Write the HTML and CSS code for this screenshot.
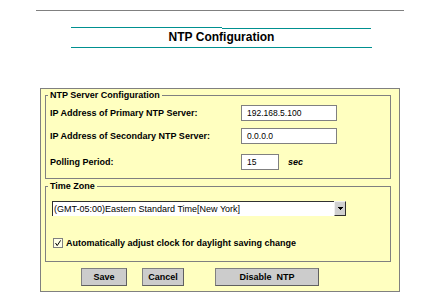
FILE: index.html
```html
<!DOCTYPE html>
<html>
<head>
<meta charset="utf-8">
<link rel="stylesheet" href="styles.css">
</head>
<body>
<div class="topline"></div>
<div class="titleblock">
  <div class="tealtop"><div class="seg"></div><div class="seg seg-low"></div></div>
  <div class="title">NTP Configuration</div>
  <div class="tealbottom"></div>
</div>
<div class="box">
  <fieldset class="fs fs-server">
    <legend>NTP Server Configuration</legend>
    <div class="row">
      <span class="label">IP Address of Primary NTP Server:</span>
      <span class="input input-wide">192.168.5.100</span>
    </div>
    <div class="row row-second">
      <span class="label">IP Address of Secondary NTP Server:</span>
      <span class="input input-wide">0.0.0.0</span>
    </div>
    <div class="row row-third">
      <span class="label">Polling Period:</span>
      <span class="input input-short">15</span>
      <span class="unit">sec</span>
    </div>
  </fieldset>
  <fieldset class="fs fs-zone">
    <legend>Time Zone</legend>
    <div class="select">
      <span class="select-text">(GMT-05:00)Eastern Standard Time[New York]</span>
      <span class="select-btn"><svg width="9" height="9" viewBox="0 0 9 9"><path d="M2 3h5v1H6v1H5v1H4V5H3V4H2z" fill="#000"/></svg></span>
    </div>
    <div class="check-row">
      <svg class="check" width="10" height="10" viewBox="0 0 10 10"><rect x="0.5" y="0.5" width="9" height="9" fill="#ffffe8" stroke="#808080"/><path d="M2.5 5 L4.2 7.6 L7.6 2.4" fill="none" stroke="#000" stroke-width="1"/></svg>
      <span class="check-label">Automatically adjust clock for daylight saving change</span>
    </div>
  </fieldset>
  <div class="buttons">
    <span class="btn btn-save">Save</span>
    <span class="btn btn-cancel">Cancel</span>
    <span class="btn btn-disable">Disable&nbsp; NTP</span>
  </div>
</div>
</body>
</html>
```
FILE: styles.css
```css
html, body {
  margin: 0;
  padding: 0;
  background: #ffffff;
  font-family: "Liberation Sans", Arial, sans-serif;
  color: #000;
}
.topline {
  margin: 10px 0 0 36px;
  width: 368px;
  height: 1px;
  background: #808080;
}
.titleblock {
  margin: 16px 0 0 71px;
  width: 301px;
}
.tealtop {
  display: flex;
  align-items: flex-start;
  height: 2px;
}
.seg {
  width: 151px;
  height: 1px;
  background: #009090;
}
.seg-low {
  width: 149px;
  margin-top: 1px;
}
.title {
  font-size: 12px;
  font-weight: bold;
  text-align: center;
  line-height: 14px;
  height: 17px;
  padding-top: 1px;
}
.tealbottom {
  height: 1px;
  background: #009090;
}
.box {
  margin: 40px 0 0 40px;
  width: 358px;
  border: 1px solid #808080;
  background: #ffffc0;
  padding: 1px 0 5px 0;
}
.fs {
  margin: 0 8px 0 4px;
  border: 1px solid #808080;
  padding: 4px 0 8px 2px;
  min-width: 0;
}
.fs legend {
  font-size: 9px;
  font-weight: bold;
  line-height: 11px;
  padding: 0 2px;
}
.row {
  display: flex;
  align-items: center;
  height: 16px;
  padding-left: 2px;
}
.row-second {
  margin-top: 7px;
}
.row-third {
  margin-top: 10px;
}
.label {
  width: 191px;
  font-size: 9px;
  font-weight: bold;
}
.input {
  box-sizing: border-box;
  height: 16px;
  border: 1px solid #808080;
  background: #fff;
  font-size: 8.5px;
  line-height: 14px;
  padding-left: 5px;
}
.input-wide {
  width: 96px;
}
.input-short {
  width: 38px;
}
.unit {
  margin-left: 9px;
  font-size: 9px;
  font-weight: bold;
  font-style: italic;
}
.fs-zone {
  margin-top: 2px;
  padding-bottom: 12px;
}
.select {
  display: flex;
  margin: 5px 0 0 4px;
  width: 294px;
  height: 15px;
}
.select-text {
  flex: 1;
  box-sizing: border-box;
  border-top: 1px solid #303030;
  border-left: 1px solid #303030;
  background: #fff;
  font-size: 9px;
  line-height: 14px;
  padding-left: 1px;
  white-space: nowrap;
}
.select-btn {
  box-sizing: border-box;
  width: 12px;
  height: 15px;
  background: #d0d0d0;
  border: 1px solid #303030;
  border-top-color: #f0f0f0;
  border-left-color: #f0f0f0;
  display: flex;
  align-items: center;
  justify-content: center;
}
.check-row {
  display: flex;
  align-items: center;
  margin: 21px 0 0 5px;
  height: 12px;
}
.check {
  display: block;
  margin-right: 3px;
}
.check-label {
  font-size: 9px;
  font-weight: bold;
}
.buttons {
  display: flex;
  margin: 6px 0 0 40px;
}
.btn {
  box-sizing: border-box;
  height: 18px;
  background: #cccccc;
  border: 1px solid #808080;
  border-right-color: #606060;
  border-bottom-color: #606060;
  font-size: 9px;
  font-weight: bold;
  line-height: 16px;
  text-align: center;
}
.btn-save {
  width: 46px;
}
.btn-cancel {
  width: 42px;
  margin-left: 15px;
}
.btn-disable {
  width: 104px;
  margin-left: 31px;
}
```
